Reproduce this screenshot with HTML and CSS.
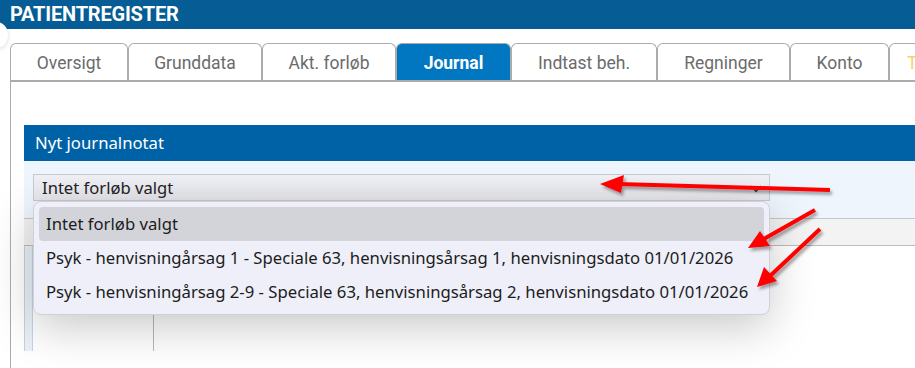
FILE: index.html
```html
<!DOCTYPE html>
<html lang="da">
<head>
    <meta charset="UTF-8">
    <title>Patientregister</title>
    <link rel="stylesheet" href="styles.css">
</head>
<body>
    <div class="topbar">PATIENTREGISTER</div>
    <div class="edge-knob"></div>

    <ul class="tabs">
        <li class="tab tab-oversigt">Oversigt</li>
        <li class="tab tab-grund">Grunddata</li>
        <li class="tab tab-akt">Akt. forløb</li>
        <li class="tab tab-journal active">Journal</li>
        <li class="tab tab-indtast">Indtast beh.</li>
        <li class="tab tab-regn">Regninger</li>
        <li class="tab tab-konto">Konto</li>
        <li class="tab tab-more">T</li>
    </ul>

    <div class="panel">
        <div class="note">
            <div class="note-head">Nyt journalnotat</div>
            <div class="note-body">
                <div class="select">
                    <span>Intet forløb valgt</span>
                    <svg class="chevron" width="12" height="8" viewBox="0 0 12 8"><path d="M1 1 L6 6.5 L11 1" fill="none" stroke="#444" stroke-width="1.3"/></svg>
                </div>
            </div>
            <div class="grid-head"></div>
            <div class="grid-row">
                <div class="grid-side"></div>
                <div class="grid-col"></div>
                <div class="grid-rest"></div>
            </div>

            <ul class="menu">
                <li class="menu-item selected">Intet forløb valgt</li>
                <li class="menu-item">Psyk - henvisningårsag 1 - Speciale 63, henvisningsårsag 1, henvisningsdato 01/01/2026</li>
                <li class="menu-item">Psyk - henvisningårsag 2-9 - Speciale 63, henvisningsårsag 2, henvisningsdato 01/01/2026</li>
            </ul>
        </div>
    </div>

    <!-- red annotation arrows -->
    <svg class="arrows" width="915" height="368" viewBox="0 0 915 368">
        <defs>
            <filter id="shade" x="-20%" y="-20%" width="140%" height="140%">
                <feDropShadow dx="2" dy="3" stdDeviation="1.5" flood-color="#000" flood-opacity="0.35"/>
            </filter>
        </defs>
        <g filter="url(#shade)" fill="#f00" stroke="#f00">
            <line x1="830" y1="190" x2="618" y2="184" stroke-width="4"/>
            <polygon points="600,184 624,175 621,193" stroke="none"/>
            <line x1="815" y1="210" x2="762" y2="240" stroke-width="4"/>
            <polygon points="748,248 760,231 770,246" stroke="none"/>
            <line x1="820" y1="229" x2="770" y2="276" stroke-width="4"/>
            <polygon points="757,287 764,267 777,281" stroke="none"/>
        </g>
    </svg>
</body>
</html>
```

FILE: styles.css
```css
body {
    margin: 0;
    font-family: Roboto, "Liberation Sans", sans-serif;
    background-color: white;
    height: 368px;
    overflow: hidden;
    position: relative;
}

.topbar {
    height: 29px;
    line-height: 29px;
    padding-left: 10px;
    background-color: #065d95;
    color: white;
    font-size: 20px;
    font-weight: bold;
    letter-spacing: -0.2px;
}

.edge-knob {
    position: absolute;
    left: -14px;
    top: 22px;
    width: 22px;
    height: 26px;
    border-radius: 50%;
    background-color: white;
    box-shadow: 0 1px 4px rgba(0,0,0,0.15);
}

.tabs {
    display: flex;
    list-style: none;
    margin: 14px 0 0 10px;
    padding: 0;
    height: 37px;
    border-bottom: 2px solid #ababab;
}

.tab {
    box-sizing: border-box;
    height: 37px;
    border: 1px solid #ababab;
    border-bottom: none;
    border-radius: 6px 6px 0 0;
    text-align: center;
    line-height: 38px;
    font-size: 17.5px;
    color: #6b6b6b;
    flex-shrink: 0;
}

.tab-oversigt { width: 118px; }
.tab-grund { width: 134px; }
.tab-akt { width: 134px; }
.tab-journal { width: 115px; }
.tab-indtast { width: 146px; }
.tab-regn { width: 133px; }
.tab-konto { width: 99px; }
.tab-more { width: 60px; color: #f5d36b; text-align: left; padding-left: 17px; }

.tab.active {
    background-color: #0077c0;
    color: white;
    font-weight: bold;
}

.panel {
    margin-left: 10px;
    border-left: 1px solid #ababab;
    padding: 43px 0 0 13px;
    height: 243px;
}

.note {
    position: relative;
}

.note-head {
    height: 36px;
    line-height: 36px;
    padding-left: 11px;
    background-color: #0062a6;
    color: white;
    font-family: "Noto Sans", "DejaVu Sans", sans-serif;
    font-size: 16.7px;
}

.note-body {
    background-color: #eef5fd;
    padding: 13px 0 17px 9px;
}

.select {
    box-sizing: border-box;
    width: 737px;
    height: 27px;
    border: 1px solid #c9c9cf;
    background: linear-gradient(#f0f0f7, #e6e6ec);
    display: flex;
    align-items: center;
    justify-content: space-between;
    padding: 0 7px 0 8px;
    font-family: "Noto Sans", "DejaVu Sans", sans-serif;
    font-size: 16.6px;
    color: #222;
}

.chevron {
    margin-top: 2px;
}

.grid-head {
    height: 26px;
    border-top: 1px solid #c6c6c6;
    border-bottom: 1px solid #bcbcbc;
    background-color: #f3f3f3;
}

.grid-row {
    display: flex;
    height: 105px;
}

.grid-side {
    width: 7px;
    border-left: 1px solid #cfcfcf;
    border-right: 1px solid #c7d4e4;
    background-color: #e9f0f8;
}

.grid-col {
    width: 120px;
    border-right: 1px solid #b9b9b9;
}

.grid-rest {
    flex: 1;
}

.menu {
    position: absolute;
    left: 9px;
    top: 76px;
    width: 737px;
    box-sizing: border-box;
    margin: 0;
    padding: 5px;
    list-style: none;
    background-color: #eeeff8;
    border: 1px solid #cfd0d8;
    border-radius: 8px;
    box-shadow: 0 12px 45px rgba(0,0,0,0.22);
    font-family: "Noto Sans", "DejaVu Sans", sans-serif;
    font-size: 16.7px;
    color: #1c1c1c;
}

.menu-item {
    height: 34px;
    line-height: 34px;
    padding-left: 7px;
    border-radius: 4px;
    white-space: nowrap;
}

.menu-item.selected {
    background-color: #d3d4da;
}

.arrows {
    position: absolute;
    left: 0;
    top: 0;
    pointer-events: none;
}
```
